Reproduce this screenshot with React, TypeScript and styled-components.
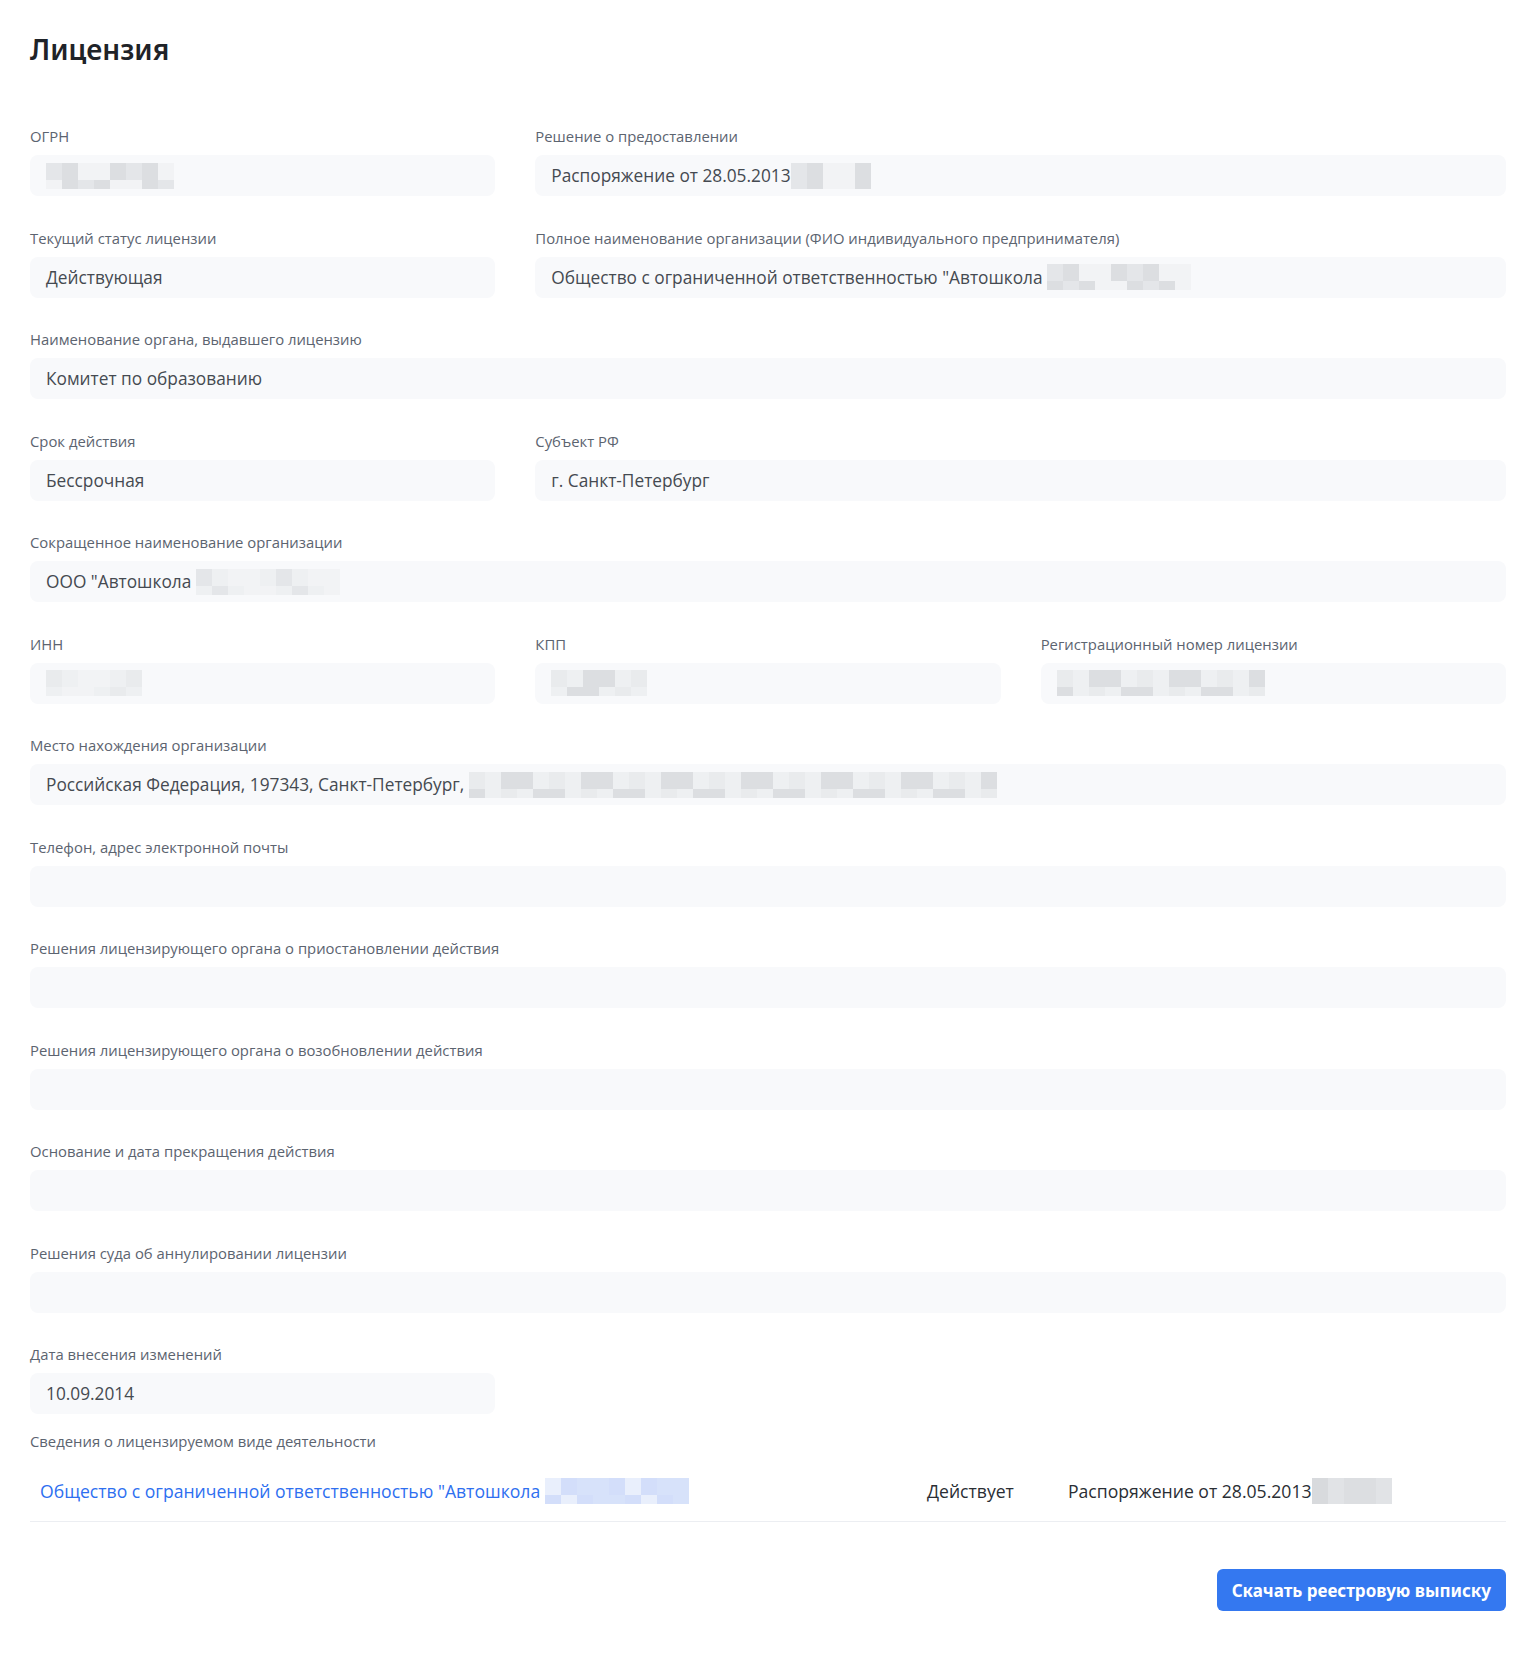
import styled, { createGlobalStyle } from "styled-components";

const GlobalStyle = createGlobalStyle`
    body {
        margin: 0;
        background: #ffffff;
        font-family: "Open Sans", "Noto Sans", sans-serif;
    }
`;

const StyledPage = styled.main`
    padding: 29px 34px 60px 30px;
    min-height: 1592px;
`;

const Title = styled.h1`
    margin: 0 0 57px;
    font-family: "Noto Sans", "Open Sans", sans-serif;
    font-size: 28px;
    line-height: 40px;
    font-weight: 600;
    color: #1f2328;
`;

const FieldsGrid = styled.div`
    display: grid;
    grid-template-columns: repeat(3, 1fr);
    column-gap: 40px;
    row-gap: 31.5px;
`;

const Field = styled.div<{ $span: number }>`
    grid-column: span ${({ $span }) => $span};
    display: flex;
    flex-direction: column;
`;

const Label = styled.div`
    font-size: 14.85px;
    line-height: 20px;
    color: #5c6470;
    margin-bottom: 9px;
    white-space: nowrap;
`;

const ValueBox = styled.div`
    height: 41px;
    background: #f8f9fb;
    border-radius: 8px;
    padding: 0 16px;
    display: flex;
    align-items: center;
    font-size: 17.3px;
    color: #454a51;
    white-space: nowrap;
    overflow: hidden;
`;

const Section = styled.section`
    margin-top: 17px;
`;

const SectionLabel = styled(Label)`
    margin-bottom: 10px;
`;

const ActivityRow = styled.div`
    display: grid;
    grid-template-columns: 887px 141px 1fr;
    align-items: center;
    height: 60px;
    border-bottom: 1px solid #eceef2;
    font-size: 17.6px;
    color: #2a2e34;
`;

const Cell = styled.div`
    padding: 0 10px;
    display: flex;
    align-items: center;
    white-space: nowrap;
`;

const LinkCell = styled.a`
    padding: 0 10px;
    display: flex;
    align-items: center;
    color: #2e6ff0;
    text-decoration: none;
    white-space: nowrap;
    cursor: pointer;
`;

const Footer = styled.div`
    display: flex;
    justify-content: flex-end;
    margin-top: 47px;
`;

const DownloadButton = styled.button`
    height: 42px;
    padding: 0 15px;
    border: none;
    border-radius: 6px;
    background: #3478f0;
    color: #ffffff;
    font-family: "Noto Sans", "Open Sans", sans-serif;
    font-size: 17px;
    font-weight: 700;
    cursor: pointer;
`;

// censored (pixelated) pieces of data
const Blur = styled.span<{ $cols: number }>`
    display: inline-grid;
    grid-template-columns: repeat(${({ $cols }) => $cols}, 16px);
    grid-template-rows: 17px 9px;
    vertical-align: middle;
    flex-shrink: 0;
`;

const GRAYS = ["#e4e6e9", "#dcdee1", "#e9ebed", "#eef0f2", "#d8dadd", "#e1e3e6", "#f2f3f5"];
const BLUES = ["#e2eafb", "#d7e2fa", "#e9effc", "#dde6fb", "#eef3fd", "#d3defa", "#f1f5fd"];

function Pixels({ width, seed, blue }: { width: number; seed: number; blue?: boolean }) {
    const cols = Math.round(width / 16);
    const palette = blue ? BLUES : GRAYS;
    const cells = [];
    for (let i = 0; i < cols * 2; i++) {
        const idx = (i * 7 + seed * 13 + ((i * i + seed) % 5)) % palette.length;
        cells.push(<span key={i} style={{ background: palette[idx] }} />);
    }
    return <Blur $cols={cols}>{cells}</Blur>;
}

type FieldData = {
    label: string;
    span: number;
    value?: React.ReactNode;
};

const fields: FieldData[] = [
    { label: "ОГРН", span: 1, value: <Pixels width={132} seed={1} /> },
    { label: "Решение о предоставлении", span: 2, value: <>Распоряжение от 28.05.2013<Pixels width={84} seed={2} /></> },
    { label: "Текущий статус лицензии", span: 1, value: "Действующая" },
    { label: "Полное наименование организации (ФИО индивидуального предпринимателя)", span: 2, value: <>Общество с ограниченной ответственностью "Автошкола&nbsp;<Pixels width={148} seed={3} /></> },
    { label: "Наименование органа, выдавшего лицензию", span: 3, value: "Комитет по образованию" },
    { label: "Срок действия", span: 1, value: "Бессрочная" },
    { label: "Субъект РФ", span: 2, value: "г. Санкт-Петербург" },
    { label: "Сокращенное наименование организации", span: 3, value: <>ООО "Автошкола&nbsp;<Pixels width={148} seed={4} /></> },
    { label: "ИНН", span: 1, value: <Pixels width={100} seed={5} /> },
    { label: "КПП", span: 1, value: <Pixels width={96} seed={6} /> },
    { label: "Регистрационный номер лицензии", span: 1, value: <Pixels width={212} seed={7} /> },
    { label: "Место нахождения организации", span: 3, value: <>Российская Федерация, 197343, Санкт-Петербург,&nbsp;<Pixels width={528} seed={8} /></> },
    { label: "Телефон, адрес электронной почты", span: 3 },
    { label: "Решения лицензирующего органа о приостановлении действия", span: 3 },
    { label: "Решения лицензирующего органа о возобновлении действия", span: 3 },
    { label: "Основание и дата прекращения действия", span: 3 },
    { label: "Решения суда об аннулировании лицензии", span: 3 },
    { label: "Дата внесения изменений", span: 1, value: "10.09.2014" },
];

export default function App() {
    return (
        <>
            <GlobalStyle />
            <StyledPage>
                <Title>Лицензия</Title>

                <FieldsGrid>
                    {fields.map((field, key) => (
                        <Field key={key} $span={field.span}>
                            <Label>{field.label}</Label>
                            <ValueBox>{field.value}</ValueBox>
                        </Field>
                    ))}
                </FieldsGrid>

                <Section>
                    <SectionLabel>Сведения о лицензируемом виде деятельности</SectionLabel>
                    <ActivityRow>
                        <LinkCell>
                            Общество с ограниченной ответственностью "Автошкола&nbsp;<Pixels width={148} seed={9} blue />
                        </LinkCell>
                        <Cell>Действует</Cell>
                        <Cell>
                            Распоряжение от 28.05.2013<Pixels width={84} seed={10} />
                        </Cell>
                    </ActivityRow>
                </Section>

                <Footer>
                    <DownloadButton>Скачать реестровую выписку</DownloadButton>
                </Footer>
            </StyledPage>
        </>
    );
}
